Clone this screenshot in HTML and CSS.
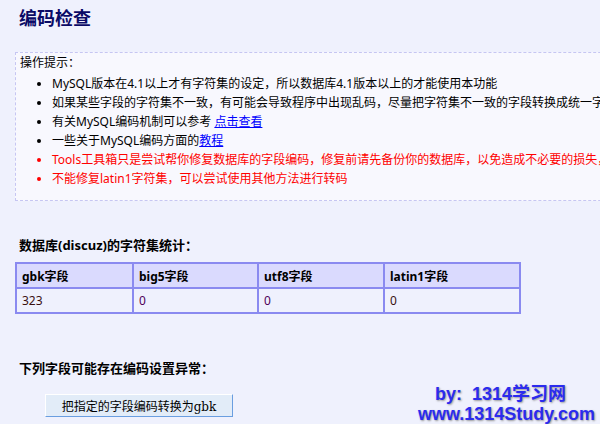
FILE: index.html
```html
<!DOCTYPE html>
<html lang="zh-CN">
<head>
    <meta charset="UTF-8">
    <title>编码检查</title>
    <link rel="stylesheet" href="styles.css">
</head>
<body>
    <div class="main">
        <h1 class="title">编码检查</h1>

        <div class="tips">
            <div class="tips-head">操作提示：</div>
            <ul>
                <li>MySQL版本在4.1以上才有字符集的设定，所以数据库4.1版本以上的才能使用本功能</li>
                <li>如果某些字段的字符集不一致，有可能会导致程序中出现乱码，尽量把字符集不一致的字段转换成统一字符集</li>
                <li>有关MySQL编码机制可以参考 <a href="#">点击查看</a></li>
                <li>一些关于MySQL编码方面的<a href="#">教程</a></li>
                <li class="warn">Tools工具箱只是尝试帮你修复数据库的字段编码，修复前请先备份你的数据库，以免造成不必要的损失，</li>
                <li class="warn">不能修复latin1字符集，可以尝试使用其他方法进行转码</li>
            </ul>
        </div>

        <h3 class="sub">数据库(discuz)的字符集统计：</h3>
        <table class="stat">
            <tr>
                <th class="c1">gbk字段</th>
                <th class="c2">big5字段</th>
                <th class="c3">utf8字段</th>
                <th>latin1字段</th>
            </tr>
            <tr>
                <td>323</td>
                <td class="num">0</td>
                <td class="num">0</td>
                <td>0</td>
            </tr>
        </table>

        <h3 class="sub sub-2">下列字段可能存在编码设置异常：</h3>
        <button class="btn">把指定的字段编码转换为gbk</button>
    </div>

    <div class="mark">
        <div>by:&nbsp;&nbsp;1314学习网</div>
        <div>www.1314Study.com</div>
    </div>
</body>
</html>
```

FILE: styles.css
```css
html {
    background-color: #eff1fd;
    overflow: hidden;
}

body {
    margin: 0;
    font-family: "Noto Sans", "Noto Sans CJK SC", sans-serif;
    font-size: 12px;
    color: #000;
}

.main {
    padding: 4px 0 0 15px;
}

.title {
    font-size: 18px;
    font-weight: bold;
    color: #0a0a66;
    margin: 0 0 0 4px;
    line-height: 28px;
}

.tips {
    width: 640px;
    margin-top: 20px;
    border: 1px dashed #c6c6f2;
    background-color: #f8f8fe;
    padding: 1px 0 12px 4px;
}

.tips-head {
    line-height: 18px;
}

.tips ul {
    margin: 2px 0 0;
    padding-left: 32px;
    list-style: disc;
}

.tips li {
    line-height: 19px;
    white-space: nowrap;
}

.tips a {
    color: #0000ff;
}

.warn {
    color: #ff0000;
}

.sub {
    font-size: 13px;
    font-weight: bold;
    margin: 34px 0 0 4px;
    line-height: 20px;
}

.sub-2 {
    margin-top: 44px;
}

.stat {
    width: 506px;
    margin-top: 7px;
    border-collapse: collapse;
}

.stat th,
.stat td {
    border: 2px solid #8a8af0;
    height: 23px;
    padding: 0 0 0 5px;
    text-align: left;
}

.stat th {
    background-color: #dadafe;
    font-weight: bold;
}

.stat td {
    color: #3a1010;
}

.stat td.num {
    color: #50005a;
}

.stat .c1 { width: 110px; }
.stat .c2 { width: 118px; }
.stat .c3 { width: 119px; }

.btn {
    display: block;
    margin: 16px 0 0 30px;
    width: 188px;
    height: 23px;
    background-color: #e2ecf8;
    border: 1px solid;
    border-color: #ffffff #6a9ee0 #6a9ee0 #ffffff;
    font-family: "DejaVu Serif", "Noto Sans CJK SC", serif;
    font-size: 12px;
    padding: 0;
    color: #000;
}

.mark {
    position: absolute;
    right: 5px;
    bottom: 0;
    text-align: right;
    font-family: "Liberation Sans", "Noto Sans CJK SC", sans-serif;
    font-weight: bold;
    font-size: 18px;
    line-height: 20px;
    color: #2b2bee;
    text-shadow: 1px 1px 2px #999;
}

.mark div:first-child {
    margin-right: 29px;
}
```
